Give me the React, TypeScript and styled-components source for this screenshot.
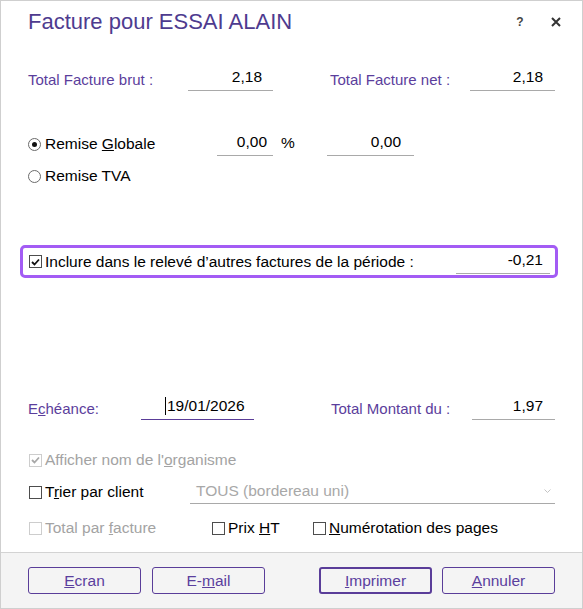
import React from "react";
import styled, { createGlobalStyle } from "styled-components";

const GlobalStyle = createGlobalStyle`
  html, body {
    margin: 0;
    padding: 0;
    background: #fff;
  }
  body {
    font-family: "Liberation Sans", Arial, sans-serif;
  }
`;

const Window = styled.div`
  box-sizing: border-box;
  width: 583px;
  height: 609px;
  border: 1px solid #cfcfcf;
  display: flex;
  flex-direction: column;
  background: #fff;
  color: #000;
`;

const Body = styled.div`
  flex: 1;
  padding: 0 27px;
  display: flex;
  flex-direction: column;
`;

const TitleBar = styled.div`
  display: flex;
  align-items: center;
  padding-top: 7px;
  height: 28px;
  margin-right: -9px;
`;

const Title = styled.h1`
  margin: 0;
  flex: 1;
  font-size: 22px;
  font-weight: normal;
  line-height: 28px;
  color: #4e3b8f;
`;

const TitleButton = styled.button`
  width: 16px;
  height: 16px;
  padding: 0;
  margin-left: 20px;
  border: none;
  background: none;
  display: flex;
  align-items: center;
  justify-content: center;
  font-family: "Liberation Sans", Arial, sans-serif;
  font-size: 12px;
  font-weight: bold;
  color: #444;
`;

const Row = styled.div<{ $top: number; $cols?: string; $h?: number }>`
  display: grid;
  grid-template-columns: ${(p) => p.$cols || "1fr"};
  align-items: center;
  height: ${(p) => p.$h || 24}px;
  margin-top: ${(p) => p.$top}px;
`;

const Label = styled.span`
  font-size: 15px;
  color: #5b3e9c;
  white-space: nowrap;
`;

const Text = styled.span<{ $disabled?: boolean }>`
  font-size: 15.5px;
  color: ${(p) => (p.$disabled ? "#a3a3a3" : "#000")};
  white-space: nowrap;
`;

const Field = styled.div<{ $pad?: number; $accent?: boolean; $left?: boolean }>`
  box-sizing: border-box;
  height: 24px;
  display: flex;
  align-items: center;
  justify-content: ${(p) => (p.$left ? "flex-start" : "flex-end")};
  padding-right: ${(p) => p.$pad ?? 11}px;
  padding-left: ${(p) => (p.$left ? 24 : 0)}px;
  border-bottom: 1px solid ${(p) => (p.$accent ? "#5a3c98" : "#a9a9a9")};
  font-size: 15.5px;
  color: #000;
  padding-bottom: 3px;
`;

const Caret = styled.span`
  flex: none;
  align-self: center;
  width: 0;
  height: 18px;
  border-left: 1px solid #000;
  margin-right: 1px;
`;

const Percent = styled.span`
  font-size: 15.5px;
  padding-left: 8px;
  padding-bottom: 3px;
`;

const Option = styled.label`
  display: flex;
  align-items: center;
  gap: 3px;
`;

const Radio = styled.span<{ $on?: boolean }>`
  box-sizing: border-box;
  width: 13px;
  height: 13px;
  border-radius: 50%;
  border: 1px solid #6b6b6b;
  background: #fff;
  display: flex;
  align-items: center;
  justify-content: center;
  margin-right: 1px;
  &::after {
    content: "";
    display: ${(p) => (p.$on ? "block" : "none")};
    width: 5px;
    height: 5px;
    border-radius: 50%;
    background: #111;
  }
`;

const Box = styled.span<{ $disabled?: boolean }>`
  box-sizing: border-box;
  width: 13px;
  height: 13px;
  margin-left: 1px;
  border: 1px solid ${(p) => (p.$disabled ? "#cdcdcd" : "#4d4d4d")};
  background: #fff;
  display: flex;
  align-items: center;
  justify-content: center;
`;

const Highlight = styled.div`
  margin: 57px -3px 0 -8px;
  height: 33px;
  box-sizing: border-box;
  border: 3px solid #a35cf4;
  border-radius: 5px;
  padding: 0 5px 0 5px;
  display: grid;
  grid-template-columns: 1fr 94px;
  align-items: center;
`;

const Select = styled.div`
  box-sizing: border-box;
  height: 24px;
  display: flex;
  align-items: center;
  justify-content: space-between;
  padding: 0 4px 2px 6px;
  border-bottom: 1px solid #a9a9a9;
  font-size: 15.5px;
  color: #a8a8a8;
`;

const Footer = styled.div`
  height: 56px;
  box-sizing: border-box;
  border-top: 1px solid #d3d3d3;
  background: #f4f4f4;
  padding: 14px 27px 0;
  display: flex;
  justify-content: space-between;
  align-items: flex-start;
`;

const ButtonGroup = styled.div<{ $gap: number }>`
  display: flex;
  gap: ${(p) => p.$gap}px;
`;

const Button = styled.button<{ $primary?: boolean }>`
  box-sizing: border-box;
  width: 113px;
  height: 27px;
  border: ${(p) => (p.$primary ? 2 : 1)}px solid #5a3d99;
  border-radius: 3px;
  background: transparent;
  color: #5b3f9e;
  font-family: "Liberation Sans", Arial, sans-serif;
  font-size: 15.5px;
  padding: 0;
`;

const Check = ({ disabled, checked }: { disabled?: boolean; checked?: boolean }) => (
  <Box $disabled={disabled}>
    {checked && (
      <svg width="9" height="8" viewBox="0 0 9 8">
        <path
          d="M1 4 L3.5 6.5 L8 1.5"
          fill="none"
          stroke={disabled ? "#a8a8a8" : "#111"}
          strokeWidth="1.8"
        />
      </svg>
    )}
  </Box>
);

export default function App() {
  return (
    <>
      <GlobalStyle />
      <Window>
        <Body>
          <TitleBar>
            <Title>Facture pour ESSAI ALAIN</Title>
            <TitleButton>?</TitleButton>
            <TitleButton>
              <svg width="10" height="10" viewBox="0 0 10 10">
                <path d="M1 1 L9 9 M9 1 L1 9" stroke="#333" strokeWidth="2" />
              </svg>
            </TitleButton>
          </TitleBar>

          <Row $top={31} $cols="160px 85px 57px 140px 85px">
            <Label>Total Facture brut :</Label>
            <Field>2,18</Field>
            <span />
            <Label>Total Facture net :</Label>
            <Field $pad={12}>2,18</Field>
          </Row>

          <Row $top={41} $cols="189px 56px 54px 87px">
            <Option>
              <Radio $on />
              <Text>
                Remise <u>G</u>lobale
              </Text>
            </Option>
            <Field $pad={6}>0,00</Field>
            <Percent>%</Percent>
            <Field $pad={13}>0,00</Field>
          </Row>

          <Row $top={8}>
            <Option>
              <Radio />
              <Text>Remise TVA</Text>
            </Option>
          </Row>

          <Highlight>
            <Option>
              <Check checked />
              <Text>Inclure dans le relevé d’autres factures de la période :</Text>
            </Option>
            <Field $pad={7}>-0,21</Field>
          </Highlight>

          <Row $top={118} $cols="113px 113px 77px 141px 83px">
            <Label>
              E<u>c</u>héance:
            </Label>
            <Field $left $accent>
              <Caret />
              <span>19/01/2026</span>
            </Field>
            <span />
            <Label>Total Montant du :</Label>
            <Field $pad={12}>1,97</Field>
          </Row>

          <Row $top={30} $h={20}>
            <Option>
              <Check checked disabled />
              <Text $disabled>
                Afficher nom de l'<u>o</u>rganisme
              </Text>
            </Option>
          </Row>

          <Row $top={10} $cols="162px 1fr">
            <Option>
              <Check />
              <Text>
                T<u>r</u>ier par client
              </Text>
            </Option>
            <Select>
              TOUS (bordereau uni)
              <svg width="7" height="4" viewBox="0 0 7 4">
                <path d="M0.5 0.5 L3.5 3.5 L6.5 0.5" fill="none" stroke="#c4c4c4" />
              </svg>
            </Select>
          </Row>

          <Row $top={14} $h={20} $cols="183px 101px 1fr">
            <Option>
              <Check disabled />
              <Text $disabled>
                Total par <u>f</u>acture
              </Text>
            </Option>
            <Option>
              <Check />
              <Text>
                Prix <u>H</u>T
              </Text>
            </Option>
            <Option>
              <Check />
              <Text>
                <u>N</u>umérotation des pages
              </Text>
            </Option>
          </Row>
        </Body>

        <Footer>
          <ButtonGroup $gap={11}>
            <Button>
              <u>E</u>cran
            </Button>
            <Button>
              E-<u>m</u>ail
            </Button>
          </ButtonGroup>
          <ButtonGroup $gap={10}>
            <Button $primary>
              <u>I</u>mprimer
            </Button>
            <Button>
              <u>A</u>nnuler
            </Button>
          </ButtonGroup>
        </Footer>
      </Window>
    </>
  );
}
